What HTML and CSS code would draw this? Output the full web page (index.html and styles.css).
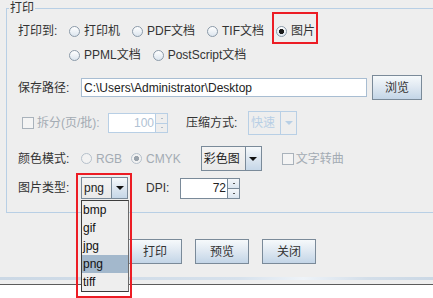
FILE: index.html
```html
<!DOCTYPE html>
<html lang="zh">
<head>
<meta charset="utf-8">
<link rel="stylesheet" href="styles.css">
</head>
<body>
<div class="dialog">
  <fieldset class="group">
    <legend>打印</legend>
    <div class="row r1">
      <span class="lbl w50">打印到:</span>
      <div class="opts">
        <label class="radio"><span class="rb"></span>打印机</label>
        <label class="radio"><span class="rb"></span>PDF文档</label>
        <label class="radio"><span class="rb"></span>TIF文档</label>
        <label class="radio"><span class="rb on"></span>图片</label>
      </div>
    </div>
    <div class="row r2">
      <span class="lbl w50"></span>
      <div class="opts">
        <label class="radio"><span class="rb"></span>PPML文档</label>
        <label class="radio"><span class="rb"></span>PostScript文档</label>
      </div>
    </div>
    <div class="row r3">
      <span class="lbl w63">保存路径:</span>
      <div class="field path">C:\Users\Administrator\Desktop</div>
      <button class="btn browse">浏览</button>
    </div>
    <div class="row r4 dis">
      <span class="cbx first"></span>
      <span class="lbl w71">拆分(页/批):</span>
      <div class="spin spin-dis"><span class="sv">100</span><span class="sa"><i class="up"></i><i class="dn"></i></span></div>
      <span class="lbl en w62 ml18">压缩方式:</span>
      <div class="combo combo-dis w49"><span class="cv">快速</span><span class="ca"><i class="tri"></i></span></div>
    </div>
    <div class="row r5">
      <span class="lbl w62">颜色模式:</span>
      <label class="radio dis"><span class="rb rb-dis"></span>RGB</label>
      <label class="radio dis ml8"><span class="rb rb-dis on"></span>CMYK</label>
      <div class="combo w61 ml20 h25"><span class="cv">彩色图</span><span class="ca"><i class="tri"></i></span></div>
      <label class="check dis ml20"><span class="cbx"></span>文字转曲</label>
    </div>
    <div class="row r6">
      <span class="lbl w63">图片类型:</span>
      <div class="combo w47 h22"><span class="cv">png</span><span class="ca"><i class="tri"></i></span></div>
      <span class="lbl w34 ml18">DPI:</span>
      <div class="spin"><span class="sv">72</span><span class="sa"><i class="up"></i><i class="dn"></i></span></div>
    </div>
  </fieldset>
  <div class="actions">
    <button class="btn">打印</button>
    <button class="btn">预览</button>
    <button class="btn">关闭</button>
  </div>
  <div class="sep"></div>
</div>
<ul class="popup">
  <li>bmp</li>
  <li>gif</li>
  <li>jpg</li>
  <li class="sel">png</li>
  <li>tiff</li>
</ul>
<div class="mark mark-img"></div>
<div class="mark mark-type"></div>
</body>
</html>
```

FILE: styles.css
```css
* { box-sizing: border-box; }
html, body { margin: 0; padding: 0; }
body {
  width: 433px;
  height: 298px;
  overflow: hidden;
  position: relative;
  background: #ffffff;
  font: 12px/14px "Liberation Sans", "Noto Sans CJK SC", sans-serif;
  color: #333333;
}
.dialog {
  width: 433px;
  height: 285px;
  background: #eeeeee;
  border-bottom: 1px solid #5c5c5c;
  display: flex;
  flex-direction: column;
  overflow: hidden;
}
.group {
  flex: none;
  margin: 1px 0 0 6px;
  padding: 3px 0 12px 0;
  border: 1px solid #b8cfe5;
  width: 470px;
  min-width: 0;
}
.group legend {
  margin-left: 2px;
  padding: 0 1px;
  height: 15px;
  line-height: 15px;
  color: #333333;
}
.row {
  display: flex;
  align-items: center;
  height: 24px;
  padding-left: 11px;
  white-space: nowrap;
}
.r3 { margin-top: 8px; height: 25px; }
.r4 { margin-top: 11px; }
.r5 { margin-top: 11px; height: 25px; }
.r6 { margin-top: 5px; }

.lbl { flex: none; }
.w50 { width: 50px; }
.w62 { width: 62px; }
.w63 { width: 63px; }
.w71 { width: 71px; }
.w34 { width: 34px; }
.ml8 { margin-left: 8px; }
.ml18 { margin-left: 18px; }
.ml20 { margin-left: 20px; }

.dis, .dis .lbl { color: #a3abb3; }
.dis .lbl.en { color: #333333; }

.opts { display: flex; gap: 11px; }
.radio { display: flex; align-items: center; }
.rb {
  width: 11px;
  height: 11px;
  margin: 0 4px 0 1px;
  border-radius: 50%;
  border: 1px solid #8b9aa9;
  background: linear-gradient(#ffffff, #dce5ee);
  flex: none;
}
.rb.on {
  background: radial-gradient(circle, #1a1a1a 0 2.3px, transparent 2.9px), linear-gradient(#ffffff, #dce5ee);
}
.rb-dis { border-color: #b5c0cb; background: #f2f2f2; }
.rb-dis.on {
  background: radial-gradient(circle, #9aa3ac 0 2.3px, transparent 2.9px), #f2f2f2;
}

.cbx {
  width: 12px;
  height: 12px;
  border: 1px solid #a9b2bb;
  background: #f4f4f4;
  flex: none;
}
.cbx.first { margin-left: 4px; margin-right: 3px; }
.check { display: flex; align-items: center; }
.check .cbx { margin-right: 2px; }

.field {
  height: 19px;
  background: #ffffff;
  border: 1px solid #a8bdd2;
  padding: 0 2px;
  display: flex;
  align-items: center;
  color: #222222;
}
.path { width: 286px; }

.btn {
  width: 54px;
  height: 25px;
  padding: 0;
  border: 1px solid #7a8a99;
  background: linear-gradient(#f6f9fb, #e3ebf3 40%, #c3d5e7);
  font: 12px/14px "Liberation Sans", "Noto Sans CJK SC", sans-serif;
  color: #333333;
  display: flex;
  align-items: center;
  justify-content: center;
}
.browse { width: 50px; margin-left: 5px; }

.combo {
  display: flex;
  height: 24px;
  border: 1px solid #7a8a99;
  background: linear-gradient(#f4f4f4, #e9e9e9);
  color: #222222;
  flex: none;
}
.w47 { width: 47px; }
.w49 { width: 49px; }
.w61 { width: 61px; }
.h22 { height: 22px; }
.h25 { height: 25px; }
.cv { flex: 1; display: flex; align-items: center; padding-left: 2px; }
.ca {
  width: 16px;
  border-left: 1px solid #7a8a99;
  background: linear-gradient(#f6f9fb, #dfe8f1 45%, #c6d7e8);
  display: flex;
  align-items: center;
  justify-content: center;
}
.tri {
  width: 0;
  height: 0;
  border-left: 4px solid transparent;
  border-right: 4px solid transparent;
  border-top: 4px solid #111111;
}
.combo-dis { border-color: #b8cfe5; background: #eeeeee; color: #b8cfe5; }
.combo-dis .ca { border-left-color: #b8cfe5; background: #eeeeee; }
.combo-dis .tri { border-top-color: #b8cfe5; }

.spin {
  display: flex;
  height: 21px;
  border: 1px solid #7a8a99;
  background: #ffffff;
  flex: none;
}
.spin .sv {
  width: 46px;
  display: flex;
  align-items: center;
  justify-content: flex-end;
  padding-right: 1px;
  color: #222222;
}
.sa {
  width: 12px;
  border-left: 1px solid #7a8a99;
  display: flex;
  flex-direction: column;
}
.sa i {
  flex: 1;
  background: linear-gradient(#f4f7fa, #dbe5ef);
  display: flex;
  align-items: center;
  justify-content: center;
}
.sa i + i { border-top: 1px solid #7a8a99; }
.sa i::before {
  content: "";
  width: 2px;
  height: 1px;
  background: #555555;
}
.spin-dis { height: 20px; border-color: #b8cfe5; }
.spin-dis .sv { color: #b0c2d4; }
.spin-dis .sa { border-left-color: #b8cfe5; }
.spin-dis .sa i { background: #eeeeee; }
.spin-dis .sa i + i { border-top-color: #b8cfe5; }
.spin-dis .sa i::before { background: #b0bcc8; }

.actions {
  display: flex;
  gap: 13px;
  padding-left: 128px;
  margin-top: 26px;
}
.sep {
  margin-top: auto;
  margin-bottom: 4px;
  height: 3px;
  background: linear-gradient(90deg, #cbd8e5, #d6e1ec 55%, #eef3f8 70%, #d3dee9 85%, #cbd8e5);
}

.popup {
  position: absolute;
  left: 81px;
  top: 200px;
  width: 48px;
  margin: 0;
  padding: 0;
  list-style: none;
  background: #eeeeee;
  border: 1px solid #3c3c3c;
  border-right-color: #6b6b6b;
  color: #111111;
}
.popup li {
  height: 18px;
  line-height: 18px;
  padding-left: 1px;
}
.popup li.sel { background: #a3b8cc; }

.mark {
  position: absolute;
  border: 2px solid #ec1c24;
}
.mark-img { left: 272px; top: 12px; width: 46px; height: 32px; }
.mark-type { left: 76px; top: 173px; width: 56px; height: 125px; }
```
